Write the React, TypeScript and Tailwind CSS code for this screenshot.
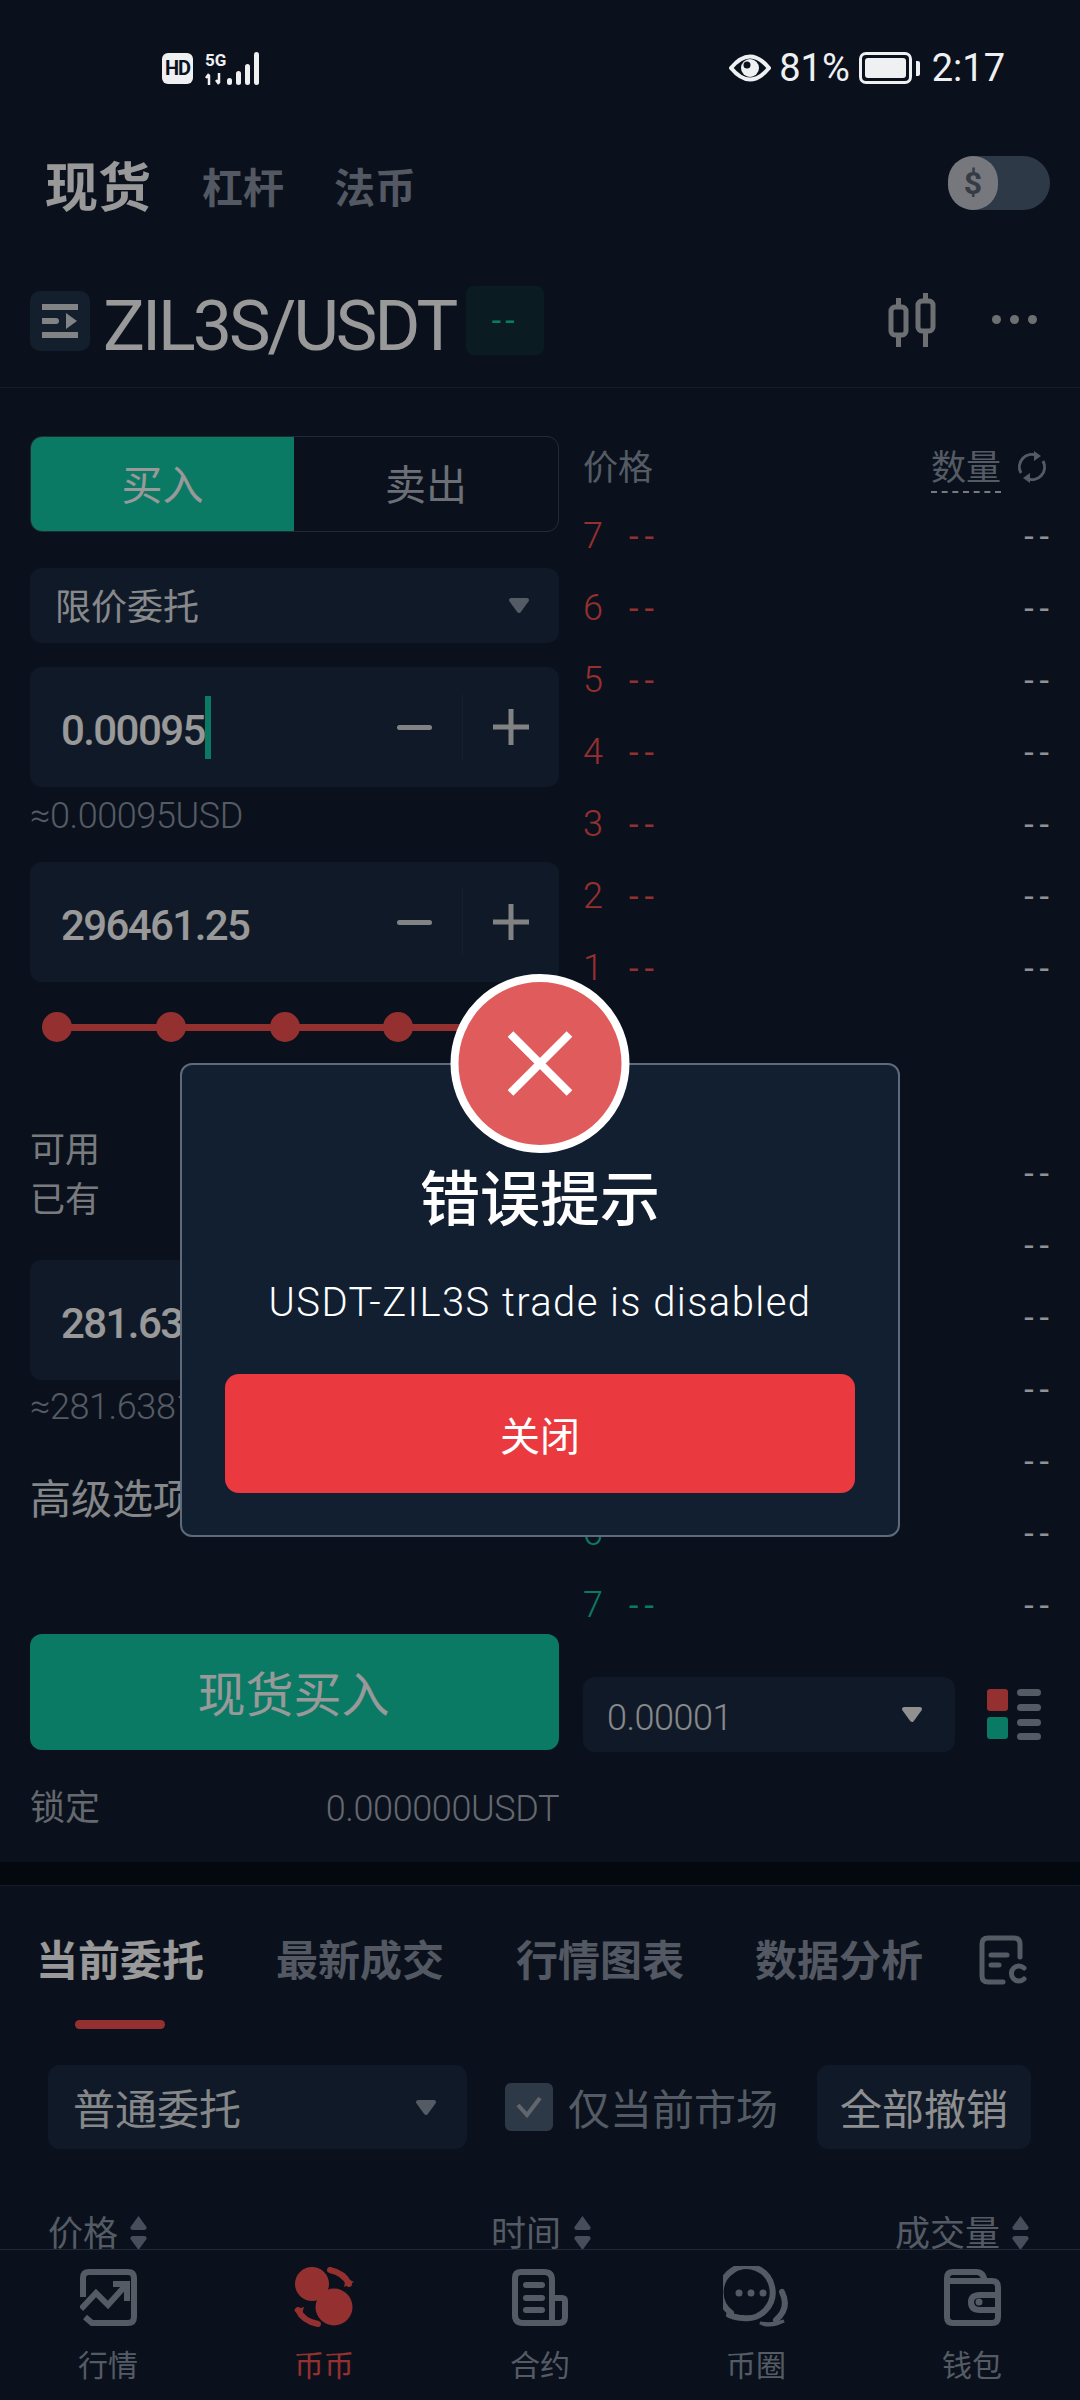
import * as React from "react";

const askRows = ["7", "6", "5", "4", "3", "2", "1"];
const bidRows = ["1", "2", "3", "4", "5", "6", "7"];

function Caret({ className, color = "#8e98a8" }: { className?: string; color?: string }) {
  return (
    <svg viewBox="0 0 22 17" className={className}>
      <path d="M3 3H19L11 14Z" fill={color} stroke={color} strokeWidth="4" strokeLinejoin="round" />
    </svg>
  );
}

function SortArrows({ className }: { className?: string }) {
  return (
    <svg viewBox="0 0 19 36" className={className}>
      <path d="M9.5 1L17.5 12Q18 15 15 15H4Q1 15 1.5 12Z" fill="#76839a" />
      <path d="M9.5 35L17.5 24Q18 21 15 21H4Q1 21 1.5 24Z" fill="#76839a" />
    </svg>
  );
}

function StepInput({ value, cursor }: { value: string; cursor?: boolean }) {
  return (
    <div className="flex h-[120px] items-center rounded-[12px] bg-[#1c2b41] pl-[31px] pr-[30px]">
      <span className="pt-[6px] text-[42px] font-medium tracking-[-1.6px] text-white">{value}</span>
      {cursor && <span className="h-[63px] w-[6px] bg-[#13cba9]" />}
      <span className="ml-auto h-[5px] w-[35px] rounded-full bg-[#d7d9dc]" />
      <span className="mx-[30px] h-[66px] w-px bg-[#25344a]" />
      <svg viewBox="0 0 36 36" className="h-[36px] w-[36px]">
        <path d="M0 18H36M18 0V36" stroke="#d7d9dc" strokeWidth="5" />
      </svg>
    </div>
  );
}

function BookRow({ n, tone }: { n: string; tone: "ask" | "bid" }) {
  const color = tone === "ask" ? "text-[#f95050]" : "text-[#13cba9]";
  return (
    <div className="flex h-[72px] items-center pt-[2px]">
      <span className={`w-[46px] text-[36px] font-light ${color}`}>{n}</span>
      <span className={`text-[34px] tracking-[6px] ${color}`}>--</span>
      <span className="ml-auto mr-[-5px] text-[34px] tracking-[6px] text-[#f2f3f5]">--</span>
    </div>
  );
}

function NavItem({ label, active, children }: { label: string; active?: boolean; children: React.ReactNode }) {
  return (
    <div className="flex w-[216px] flex-col items-center">
      <div className="flex h-[62px] items-center justify-center">{children}</div>
      <span className={`mt-[18px] text-[30px] leading-[40px] ${active ? "text-[#f95050]" : "text-[#8e98a8]"}`}>
        {label}
      </span>
    </div>
  );
}

export default function App() {
  return (
    <div className="relative flex h-[2400px] w-[1080px] flex-col overflow-hidden bg-[#111d2f] font-['Roboto','Noto_Sans_CJK_SC',sans-serif] text-white">
      {/* status bar stays above the dim layer */}
      <div className="relative z-20 flex h-[136px] shrink-0 items-center pl-[162px] pr-[75px]">
        <span className="flex h-[31px] w-[31px] items-center justify-center rounded-[6px] bg-[#eef0f2] text-[20px] font-bold tracking-[-1px] text-[#0a121d]">
          HD
        </span>
        <div className="ml-[12px] flex h-[33px] items-end">
          <div className="flex flex-col">
            <span className="text-[17px] font-bold leading-[17px] text-[#eef0f2]">5G</span>
            <svg viewBox="0 0 18 12" className="mt-[4px] h-[12px] w-[18px]">
              <path d="M4 12V2M1 5L4 1M14 0V10M11 7L14 11" stroke="#eef0f2" strokeWidth="2.5" fill="none" />
            </svg>
          </div>
          <svg viewBox="0 0 36 33" className="h-[33px] w-[36px]">
            <rect x="1" y="26" width="5" height="7" rx="2.5" fill="#eef0f2" />
            <rect x="10" y="19" width="5" height="14" rx="2.5" fill="#eef0f2" />
            <rect x="19" y="12" width="5" height="21" rx="2.5" fill="#eef0f2" />
            <rect x="28" y="0" width="5" height="33" rx="2.5" fill="#eef0f2" />
          </svg>
        </div>
        <svg viewBox="0 0 42 28" className="ml-auto h-[28px] w-[42px]">
          <path d="M2 14Q21 -9 40 14Q21 37 2 14Z" fill="none" stroke="#eef0f2" strokeWidth="4" strokeLinejoin="round" />
          <circle cx="21" cy="14" r="9" fill="#eef0f2" />
          <circle cx="18" cy="11" r="3.5" fill="#0a121d" />
        </svg>
        <span className="ml-[8px] text-[38px] leading-none text-[#eef0f2]">81%</span>
        <div className="ml-[9px] h-[32px] w-[53px] rounded-[7px] border-[3px] border-[#eef0f2] p-[3px]">
          <div className="h-full w-full rounded-[3px] bg-[#eef0f2]" />
        </div>
        <span className="ml-[4px] h-[15px] w-[4px] rounded-r-[2px] bg-[#eef0f2]" />
        <span className="ml-[12px] text-[38px] leading-none text-[#eef0f2]">2:17</span>
      </div>

      <div className="flex h-[102px] shrink-0 items-center pl-[45px] pr-[30px]">
        <span className="pt-[5px] text-[53px] font-bold text-white">现货</span>
        <span className="ml-[51px] pt-[5px] text-[41px] font-bold text-[#8a93a3]">杠杆</span>
        <span className="ml-[50px] pt-[5px] text-[41px] font-bold text-[#8a93a3]">法币</span>
        <div className="ml-auto -mt-[8px] flex h-[54px] w-[102px] rounded-full bg-[#4e6078]">
          <span className="flex h-[54px] w-[50px] items-center justify-center rounded-full bg-[#c5c9d0] text-[32px] font-bold text-[#5a6574]">
            $
          </span>
        </div>
      </div>

      <div className="flex h-[150px] shrink-0 items-start border-b border-[#24303f] pl-[30px] pr-[43px] pt-[48px]">
        <div className="mt-[5px] flex h-[60px] w-[60px] items-center justify-center rounded-[10px] bg-[#21344c]">
          <svg viewBox="0 0 36 36" className="h-[36px] w-[36px]">
            <path d="M1 4H35M1 32H35M1 18H14" stroke="#d8dadd" strokeWidth="6" strokeLinecap="round" />
            <path d="M24 10L35 18L24 26Z" fill="#d8dadd" />
          </svg>
        </div>
        <span className="ml-[13px] mt-[5px] text-[70px] leading-[70px] tracking-[-3px] text-white">ZIL3S/USDT</span>
        <div className="ml-[11px] flex h-[69px] w-[78px] items-center justify-center rounded-[8px] bg-[#122f37] text-[34px] tracking-[4px] text-[#13cba9]">
          --
        </div>
        <svg viewBox="0 0 48 54" className="ml-auto mt-[7px] h-[54px] w-[48px]">
          <rect x="3" y="14" width="15" height="28" rx="4" fill="none" stroke="#b6bac0" strokeWidth="5" />
          <rect x="30" y="8" width="15" height="30" rx="4" fill="none" stroke="#b6bac0" strokeWidth="5" />
          <path d="M10.5 5V14M10.5 42V54M37.5 0V8M37.5 38V54" stroke="#b6bac0" strokeWidth="5" />
        </svg>
        <div className="ml-[56px] mt-[29px] flex gap-[9px]">
          <span className="h-[9px] w-[9px] rounded-full bg-[#b6bac0]" />
          <span className="h-[9px] w-[9px] rounded-full bg-[#b6bac0]" />
          <span className="h-[9px] w-[9px] rounded-full bg-[#b6bac0]" />
        </div>
      </div>

      <div className="flex h-[1474px] shrink-0 gap-[24px] pl-[30px] pr-[30px]">
        <div className="w-[529px] shrink-0 pt-[48px]">
          <div className="flex h-[96px] overflow-hidden rounded-[12px] border border-[#3a475a]">
            <div className="flex w-[263px] items-center justify-center bg-[#13cba9] pt-[6px] text-[41px] text-white">买入</div>
            <div className="flex flex-1 items-center justify-center pt-[6px] text-[41px] text-[#b4bac4]">卖出</div>
          </div>
          <div className="mt-[36px] flex h-[75px] items-center rounded-[12px] bg-[#1c2b41] pl-[25px] pr-[29px]">
            <span className="pt-[5px] text-[36px] text-[#e2e4e8]">限价委托</span>
            <Caret className="ml-auto h-[17px] w-[22px]" />
          </div>
          <div className="mt-[24px]">
            <StepInput value="0.00095" cursor />
          </div>
          <div className="flex h-[75px] items-start pt-[9px] text-[36px] font-light leading-[40px] tracking-[-0.4px] text-[#8e98a8]">
            ≈0.00095USD
          </div>
          <StepInput value="296461.25" />
          <div className="relative ml-[12px] mr-[32px] mt-[30px] flex h-[30px] items-center justify-between">
            <span className="absolute left-[15px] right-[15px] h-[7px] bg-[#f95050]" />
            {[0, 1, 2, 3, 4].map((i) => (
              <span key={i} className="relative h-[30px] w-[30px] rounded-full bg-[#f95050]" />
            ))}
          </div>
          <div className="mt-[84px] text-[35px] leading-[50px] text-[#c8ccd2]">
            <div>可用</div>
            <div>已有</div>
          </div>
          <div className="mt-[34px] flex h-[120px] items-center rounded-[12px] bg-[#1c2b41] pl-[31px]">
            <span className="pt-[6px] text-[42px] font-medium tracking-[-1.6px] text-white">281.6381</span>
          </div>
          <div className="flex h-[61px] items-start pt-[7px] text-[36px] font-light leading-[40px] tracking-[-0.4px] text-[#8e98a8]">
            ≈281.6381
          </div>
          <div className="mt-[34px] text-[41px] leading-[50px] text-[#dfe1e5]">高级选项</div>
          <div className="mt-[109px] flex h-[116px] items-center justify-center rounded-[12px] bg-[#13cba9] pr-[2px] pt-[8px] text-[48px] text-white">
            现货买入
          </div>
          <div className="mt-[39px] flex items-center justify-between text-[35px] leading-[40px] text-[#a8aeb8]">
            <span>锁定</span>
            <span className="text-[36px] font-light tracking-[-0.4px]">0.000000USDT</span>
          </div>
        </div>

        <div className="flex-1 pt-[48px]">
          <div className="flex h-[63px] items-start pt-[13px] text-[35px] leading-[40px] text-[#8e98a8]">
            <span>价格</span>
            <span className="ml-auto border-b-2 border-dashed border-[#c8ccd2] pb-[2px]">数量</span>
            <svg viewBox="0 0 30 34" className="ml-[16px] mr-[3px] mt-[1px] h-[34px] w-[30px]">
              <path d="M4 23A12.5 12.5 0 0 1 20 5.5M26 11A12.5 12.5 0 0 1 10 28.500" fill="none" stroke="#8e98a8" strokeWidth="3" />
              <path d="M17 1L24 6L17 11ZM13 23L6 28L13 33Z" fill="#8e98a8" />
            </svg>
          </div>
          {askRows.map((n) => (
            <BookRow key={`ask-${n}`} n={n} tone="ask" />
          ))}
          <div className="h-[133px]" />
          {bidRows.map((n) => (
            <BookRow key={`bid-${n}`} n={n} tone="bid" />
          ))}
          <div className="mt-[37px] flex items-center">
            <div className="flex h-[75px] w-[372px] items-center rounded-[12px] bg-[#1c2b41] pl-[24px] pr-[32px]">
              <span className="pt-[7px] text-[36px] font-light tracking-[-0.5px] text-[#e2e4e8]">0.00001</span>
              <Caret className="ml-auto h-[17px] w-[22px]" color="#f0f0f0" />
            </div>
            <div className="ml-[32px] grid grid-cols-[21px_24px] gap-x-[9px]">
              <span className="row-span-2 h-[22px] rounded-[3px] bg-[#f95050]" />
              <span className="h-[7px] rounded-full bg-[#8e98a8]" />
              <span className="mt-[7px] h-[7px] rounded-full bg-[#8e98a8]" />
              <span className="row-span-2 mt-[6px] h-[22px] rounded-[3px] bg-[#13cba9]" />
              <span className="mt-[8px] h-[7px] rounded-full bg-[#8e98a8]" />
              <span className="mt-[7px] h-[7px] rounded-full bg-[#8e98a8]" />
            </div>
          </div>
        </div>
      </div>

      <div className="h-[24px] shrink-0 border-b border-[#24303f] bg-[#080f1c]" />

      <div className="min-h-0 flex-1 overflow-hidden">
        <div className="flex h-[134px] items-start pl-[36px] pr-[53px] pt-[53px]">
          <span className="text-[42px] font-bold leading-[46px] text-white">当前委托</span>
          <span className="ml-[72px] text-[42px] font-bold leading-[46px] text-[#8a93a3]">最新成交</span>
          <span className="ml-[72px] text-[42px] font-bold leading-[46px] text-[#8a93a3]">行情图表</span>
          <span className="ml-[71px] text-[42px] font-bold leading-[46px] text-[#8a93a3]">数据分析</span>
          <svg viewBox="0 0 48 50" className="ml-auto mt-[-4px] h-[50px] w-[48px]">
            <path
              d="M24 47H9Q3 47 3 41V9Q3 3 9 3H35Q41 3 41 9V22M12 20H28M12 30H20"
              fill="none"
              stroke="#8e98a8"
              strokeWidth="5"
              strokeLinecap="round"
            />
            <path d="M45 33A7.500 7.500 0 1 0 45 44" fill="none" stroke="#8e98a8" strokeWidth="5" strokeLinecap="round" />
          </svg>
        </div>
        <div className="relative flex h-[9px] pl-[75px]">
          <span className="h-[9px] w-[90px] rounded-full bg-[#f95050]" />
        </div>
        <div className="mt-[36px] flex h-[84px] items-center pl-[48px] pr-[49px]">
          <div className="flex h-[84px] w-[419px] items-center rounded-[12px] bg-[#1c2b41] pl-[25px] pr-[30px]">
            <span className="pt-[6px] text-[42px] text-[#dfe1e5]">普通委托</span>
            <Caret className="ml-auto h-[17px] w-[22px]" />
          </div>
          <div className="ml-[38px] flex h-[48px] w-[48px] items-center justify-center rounded-[6px] bg-[#4e6078]">
            <svg viewBox="0 0 26 22" className="h-[22px] w-[26px]">
              <path d="M2 9L11 19L24 2" fill="none" stroke="#a4abb5" strokeWidth="4" />
            </svg>
          </div>
          <span className="ml-[15px] pt-[6px] text-[42px] text-[#8e98a8]">仅当前市场</span>
          <div className="ml-auto flex h-[84px] w-[214px] items-center justify-center rounded-[12px] bg-[#1c2b41] pt-[6px] text-[42px] text-[#eceef0]">
            全部撤销
          </div>
        </div>
        <div className="mt-[63px] flex h-[46px] items-center pl-[48px] pr-[50px] text-[35px] leading-[46px] text-[#8e98a8]">
          <span>价格</span>
          <SortArrows className="ml-[11px] -mt-[5px] h-[36px] w-[19px]" />
          <span className="ml-[343px]">时间</span>
          <SortArrows className="ml-[12px] -mt-[5px] h-[36px] w-[19px]" />
          <span className="ml-auto">成交量</span>
          <SortArrows className="ml-[11px] -mt-[5px] h-[36px] w-[19px]" />
        </div>
      </div>

      <nav className="flex h-[151px] shrink-0 border-t border-[#3a475a] bg-[#111d2f] pt-[16px]">
        <NavItem label="行情">
          <svg viewBox="0 0 57 57" className="h-[57px] w-[57px]">
            <path
              d="M3 28V9Q3 3 9 3H48Q54 3 54 9V48Q54 54 48 54H12L5 48"
              fill="none"
              stroke="#8e98a8"
              strokeWidth="6"
            />
            <path d="M1 40L16 24L28 36L46 16" fill="none" stroke="#8e98a8" strokeWidth="6" />
            <path d="M33 15H47V32" fill="none" stroke="#8e98a8" strokeWidth="6" />
          </svg>
        </NavItem>
        <NavItem label="币币" active>
          <svg viewBox="0 0 60 60" className="h-[60px] w-[60px]">
            <circle cx="18" cy="17" r="17" fill="#f95050" />
            <circle cx="40" cy="40" r="18.5" fill="#f95050" />
            <path d="M36 3Q50 6 55 17" fill="none" stroke="#f95050" strokeWidth="6" strokeLinecap="round" />
            <path d="M50 20L60 15L52 11Z" fill="#f95050" />
            <path d="M4 43Q9 54 24 57" fill="none" stroke="#f95050" strokeWidth="6" strokeLinecap="round" />
            <path d="M0 43L10 40L7 50Z" fill="#f95050" />
          </svg>
        </NavItem>
        <NavItem label="合约">
          <svg viewBox="0 0 56 57" className="h-[57px] w-[56px]">
            <path
              d="M40 54H11Q3 54 3 46V9Q3 3 9 3H32Q40 3 40 11V54H47Q53 54 53 48V32Q53 29 50 29H40"
              fill="none"
              stroke="#8e98a8"
              strokeWidth="6"
            />
            <path d="M14 16H30M14 29H30M14 41H30" stroke="#8e98a8" strokeWidth="6" strokeLinecap="round" />
          </svg>
        </NavItem>
        <NavItem label="币圈">
          <svg viewBox="0 0 66 62" className="h-[62px] w-[66px]">
            <path
              d="M8 47A26 26 0 1 1 20 52Q14 52 6 49"
              fill="none"
              stroke="#8e98a8"
              strokeWidth="6"
              strokeLinecap="round"
            />
            <circle cx="16" cy="27" r="3.5" fill="#8e98a8" />
            <circle cx="28" cy="27" r="3.5" fill="#8e98a8" />
            <circle cx="40" cy="27" r="3.5" fill="#8e98a8" />
            <path d="M59 26Q67 42 53 54" fill="none" stroke="#8e98a8" strokeWidth="6" strokeLinecap="round" />
            <path d="M37 57Q50 59 61 55Q48 62 37 57Z" fill="#8e98a8" stroke="#8e98a8" strokeWidth="3" />
          </svg>
        </NavItem>
        <NavItem label="钱包">
          <svg viewBox="0 0 57 57" className="h-[57px] w-[57px]">
            <path
              d="M3 14V48Q3 54 9 54H48Q54 54 54 48V18Q54 12 48 12H6M3 14V9Q3 3 9 3H33Q39 3 41 12"
              fill="none"
              stroke="#8e98a8"
              strokeWidth="6"
            />
            <path d="M54 26H36Q27 26 27 33Q27 41 36 41H54" fill="none" stroke="#8e98a8" strokeWidth="6" />
            <circle cx="35" cy="33" r="3.5" fill="#8e98a8" />
          </svg>
        </NavItem>
      </nav>

      {/* error dialog */}
      <div className="absolute inset-0 z-10 flex justify-center bg-black/40 pt-[1063px]">
        <div className="relative h-[474px] w-[720px] rounded-[12px] border-2 border-[#5d6a7c] bg-[#121f31] px-[43px] pt-[106px]">
          <div className="absolute left-1/2 top-[-91px] flex h-[179px] w-[179px] -translate-x-1/2 items-center justify-center rounded-full border-[8px] border-white bg-[#e05b5b]">
            <svg viewBox="0 0 65 65" className="h-[65px] w-[65px]">
              <path d="M3 3L62 62M62 3L3 62" stroke="#fff" strokeWidth="8" />
            </svg>
          </div>
          <div className="text-center text-[60px] font-medium leading-[60px]">错误提示</div>
          <div className="mt-[47px] whitespace-nowrap text-center text-[40px] font-light leading-[50px] tracking-[1.4px]">
            USDT-ZIL3S trade is disabled
          </div>
          <div className="mt-[46px] flex h-[119px] items-center justify-center rounded-[14px] bg-[#ea3a40] pt-[8px] text-[40px]">
            关闭
          </div>
        </div>
      </div>
    </div>
  );
}
